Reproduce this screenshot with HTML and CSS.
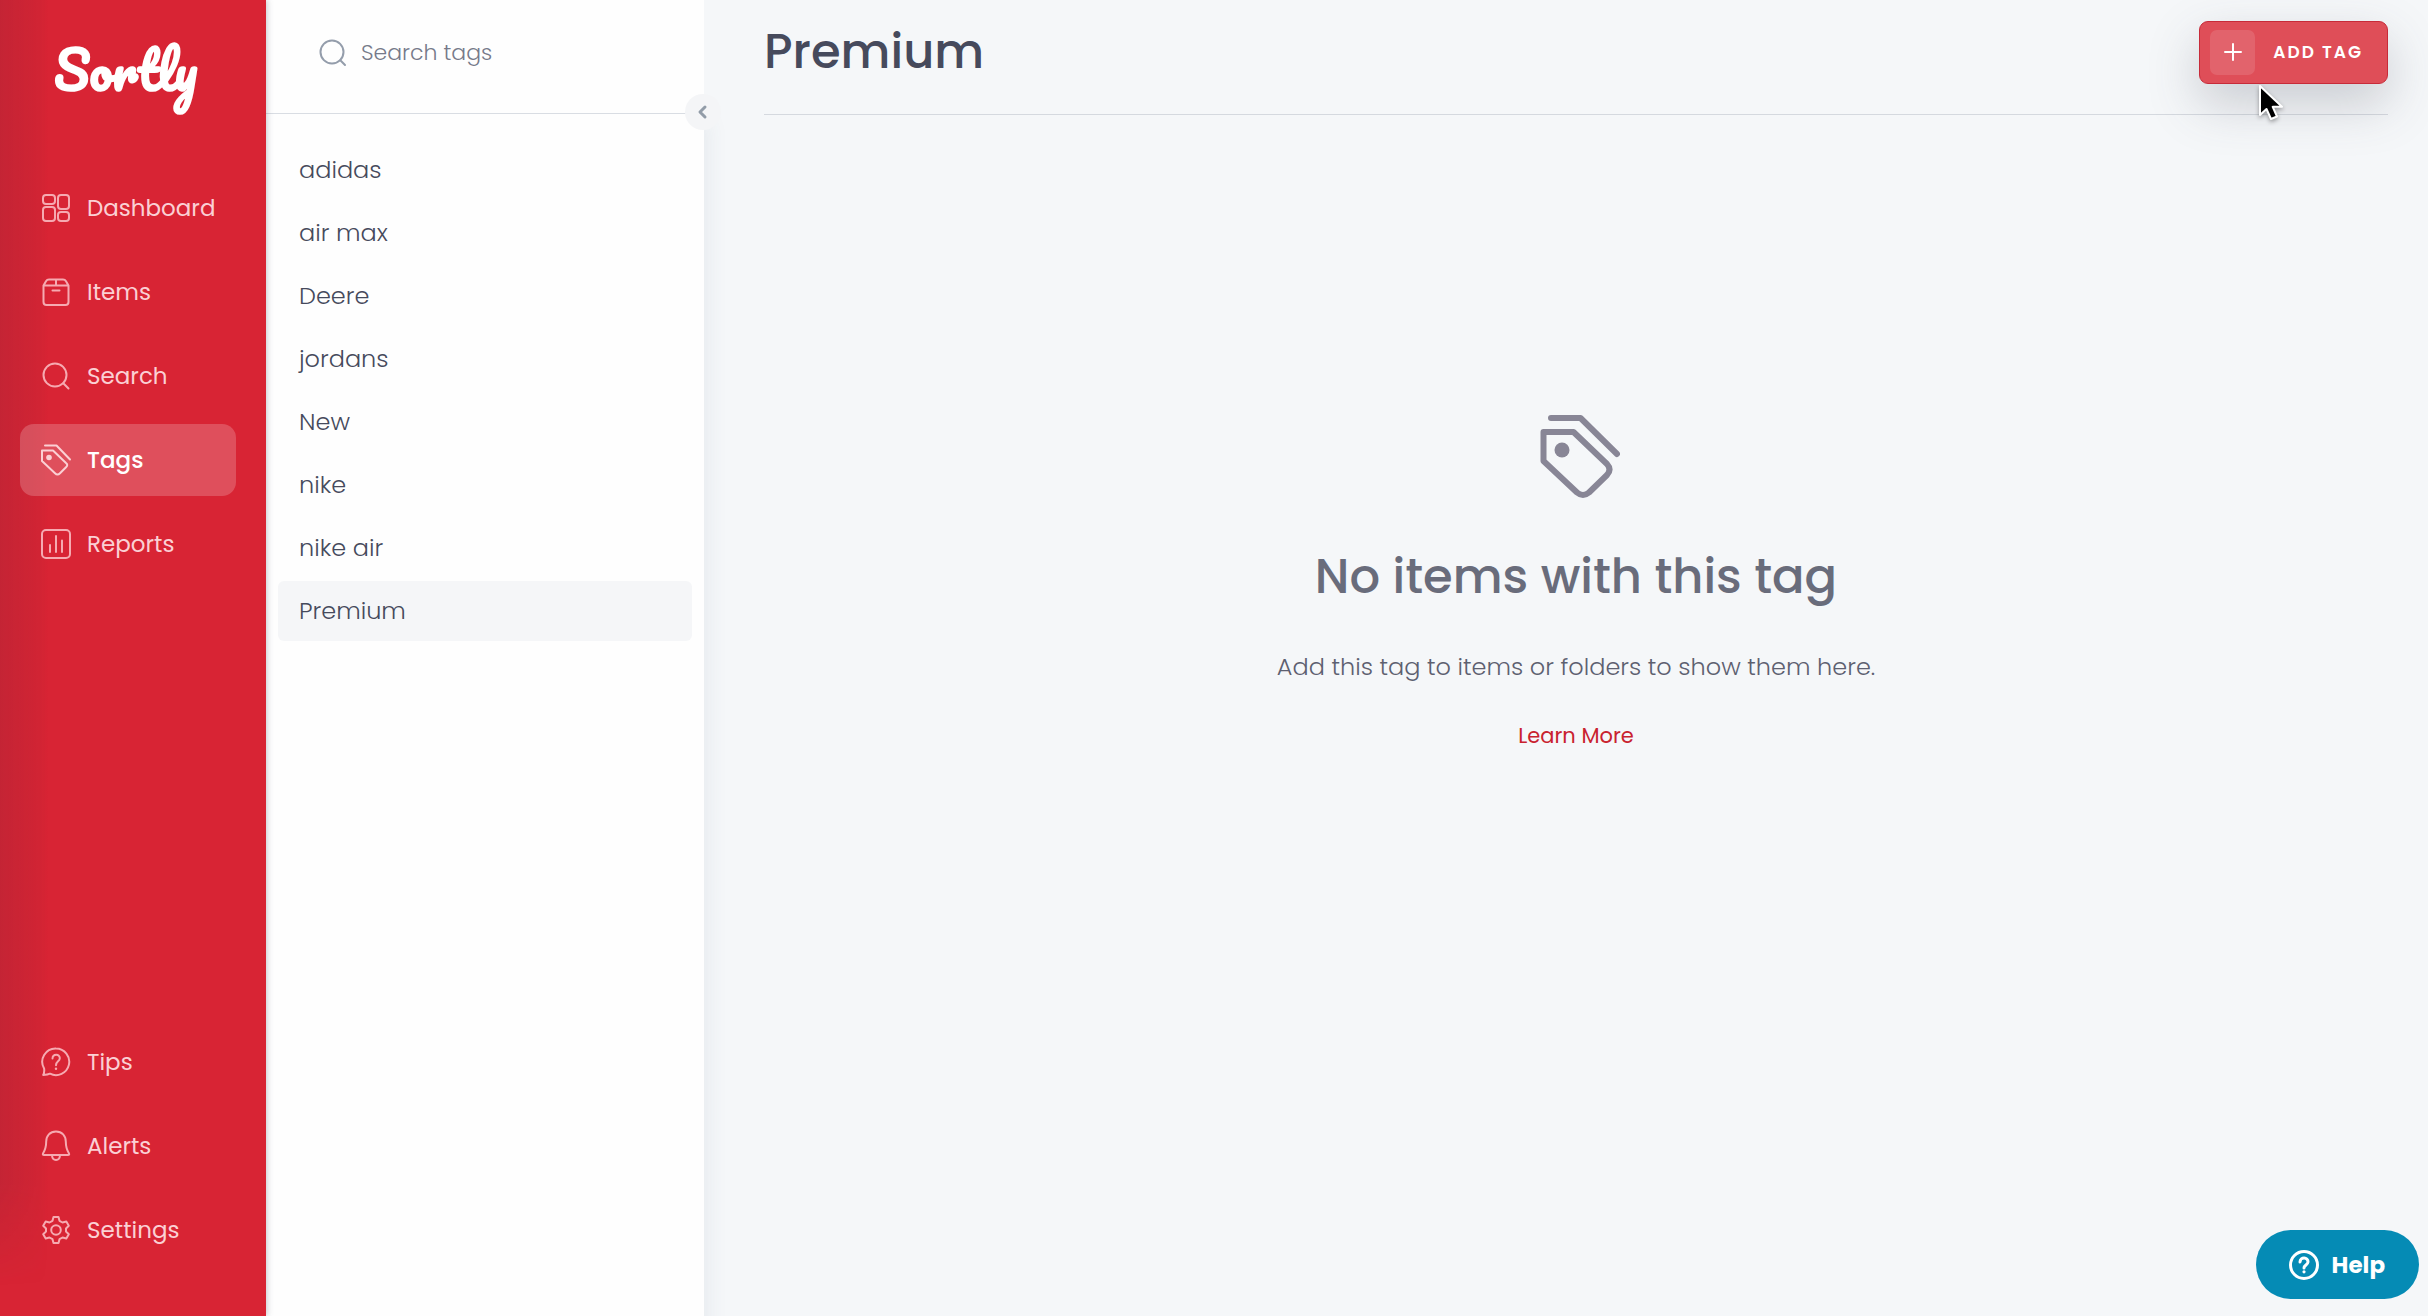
FILE: index.html
```html
<!DOCTYPE html>
<html lang="en">
	<head>
		<meta charset="utf-8" />
		<title>Sortly - Tags</title>
		<link rel="stylesheet" href="styles.css">
	</head>
	<body>
		<div class="wrap">
			<nav class="sidebar">
				<a class="logo" href="#">Sortly</a>

				<!-- main menu -->
				<ul class="menu">
					<li><a href="#">
						<svg class="icon" viewBox="0 0 32 32"><rect x="3" y="3" width="12" height="9" rx="3"/><rect x="18" y="3" width="11" height="14" rx="3"/><rect x="3" y="15" width="12" height="14" rx="3"/><rect x="18" y="20" width="11" height="9" rx="3"/></svg>
						Dashboard</a></li>
					<li><a href="#">
						<svg class="icon" viewBox="0 0 32 32"><path d="M3.500 9.500 6 5.200Q7 3.500 9 3.500h14q2 0 3 1.700l2.500 4.300V26q0 3-3 3h-19q-3 0-3-3zM3.500 9.500h25M16 3.500v6M12.500 14.500h7"/></svg>
						Items</a></li>
					<li><a href="#">
						<svg class="icon" viewBox="0 0 32 32"><circle cx="15" cy="15" r="11.500"/><path d="m23.300 23.300 5.200 5.200"/></svg>
						Search</a></li>
					<li><a class="active" href="#">
						<svg class="icon" viewBox="0 0 32 32"><path d="M2 6.500h11L26 19q2.500 2 0 4.300l-6 6q-2.500 2.500-5 0L2 17zM5 1.500h11.500L30 15.500"/><circle class="dot" cx="9" cy="13.500" r="2.800"/></svg>
						Tags</a></li>
					<li><a href="#">
						<svg class="icon" viewBox="0 0 32 32"><rect x="2" y="2" width="28" height="28" rx="4"/><path d="M10 17v7M16 8v16M22 12.500V24"/></svg>
						Reports</a></li>
				</ul>

				<!-- bottom menu -->
				<ul class="menu menu-bottom">
					<li><a href="#">
						<svg class="icon" viewBox="0 0 32 32"><path d="M16 2.500a13.300 13.300 0 1 1-6 25.200c-1.500.9-4 1.300-6.800 1.300 1-2 1.300-4 .9-6.500A13.300 13.300 0 0 1 16 2.500zM12.500 12.500c.3-5 7.500-4.700 7.300-.2-.1 3.200-3.800 3-3.800 7"/><circle class="dot" cx="16" cy="22.700" r="1.200"/></svg>
						Tips</a></li>
					<li><a href="#">
						<svg class="icon" viewBox="0 0 32 32"><path d="M16 1.500c-6 0-9.800 4.200-9.800 10 0 6-1 8.500-3.200 12-.5 1 0 1.500 1 1.500h24c1 0 1.500-.5 1-1.500-2.200-3.500-3.200-6-3.200-12 0-5.800-3.800-10-9.800-10zM12 25.500c.5 6 7.500 6 8 0"/></svg>
						Alerts</a></li>
					<li><a href="#">
						<svg class="icon" viewBox="0 0 32 32"><circle cx="16" cy="16" r="4.800"/><path d="M13.500 3h5l1 3.800 3 1.700 3.800-1 2.500 4.300-2.800 2.700v3l2.800 2.700-2.500 4.300-3.800-1-3 1.700-1 3.800h-5l-1-3.800-3-1.700-3.800 1-2.500-4.300L6 17.500v-3l-2.800-2.700 2.500-4.300 3.800 1 3-1.700z"/></svg>
						Settings</a></li>
				</ul>
			</nav>

			<aside class="tags">
				<div class="tags-search">
					<label for="search"><svg class="icon" viewBox="0 0 32 32"><circle cx="15" cy="15" r="11.500"/><path d="m23.300 23.300 4.700 4.700"/></svg></label>
					<input id="search" type="text" placeholder="Search tags" aria-label="Search tags" />
				</div>
				<button class="collapse" type="button" aria-label="Collapse">
					<svg viewBox="0 0 12 16"><path d="M9 3 4 8l5 5"/></svg>
				</button>
				<ul class="tag-list">
					<li><a href="#">adidas</a></li>
					<li><a href="#">air max</a></li>
					<li><a href="#">Deere</a></li>
					<li><a href="#">jordans</a></li>
					<li><a href="#">New</a></li>
					<li><a href="#">nike</a></li>
					<li><a href="#">nike air</a></li>
					<li><a class="active" href="#">Premium</a></li>
				</ul>
			</aside>

			<main class="content">
				<header class="content-head">
					<h1>Premium</h1>
					<button class="add" type="button">
						<span class="plus"><svg viewBox="0 0 18 18"><path d="M9 1v16M1 9h16"/></svg></span>
						ADD TAG
					</button>
				</header>

				<section class="empty">
					<svg class="empty-icon" viewBox="-8 0 88 84"><path d="M3.500 17h30L67 49q5 5.500 0 11L49 77.500q-6 5-12 0L3.500 46zM11 3h29.500L77 39"/><circle class="dot" cx="22" cy="35" r="7.500"/></svg>
					<h2>No items with this tag</h2>
					<p>Add this tag to items or folders to show them here.</p>
					<a href="#">Learn More</a>
				</section>
			</main>
		</div>

		<button class="help" type="button">
			<svg viewBox="0 0 32 32"><circle cx="16" cy="16" r="13.500"/><path d="M12 13c.2-5.500 8.300-5 8 0-.2 3-4 3-4 6"/><circle class="dot" cx="16" cy="22.800" r="1.600"/></svg>
			Help
		</button>

		<!-- mouse pointer -->
		<svg class="pointer" viewBox="0 0 26 38"><path d="M2 2v29l6.500-6 4.500 10 6-2.500-4.300-9.700H24z"/></svg>
	</body>
</html>
```

FILE: styles.css
```css
*{
	padding: 0;
	margin: 0;
	box-sizing: border-box;
}
body{
	font-family: "Poppins", "Inter", sans-serif;
	font-size: 24px;
	color: #464a5c;
	background-color: #f5f7f9;
}
ul{
	list-style: none;
}
a{
	text-decoration: none;
	color: inherit;
}
button{
	border: none;
	font-family: inherit;
	cursor: pointer;
}
svg{
	fill: none;
	stroke: currentColor;
	stroke-width: 2;
	stroke-linecap: round;
	stroke-linejoin: round;
}
.dot{
	fill: currentColor;
	stroke: none;
}
.icon{
	width: 32px;
	height: 32px;
	flex: none;
}
.wrap{
	display: flex;
	min-height: 100vh;
}

/* red sidebar */
.sidebar{
	position: relative;
	z-index: 2;
	width: 266px;
	flex: none;
	display: flex;
	flex-direction: column;
	padding: 0 30px 50px 20px;
	background-color: #d82434;
	color: #fbd0d4;
	box-shadow: 1px 0 6px rgba(70, 74, 92, .3);
}
.sidebar::before{
	content: "";
	position: absolute;
	left: 0;
	top: 0;
	bottom: 30px;
	width: 48px;
	background: linear-gradient(to right, rgba(80, 40, 60, .14), rgba(80, 40, 60, .05) 80%, transparent);
	-webkit-mask-image: linear-gradient(to bottom, #000 92%, transparent);
	mask-image: linear-gradient(to bottom, #000 92%, transparent);
}
.logo{
	height: 172px;
	padding: 34px 0 0 34px;
	font-family: "Pacifico", "Lobster", "Lato", sans-serif;
	font-size: 51px;
	font-weight: 700;
	line-height: 72px;
	color: #fff;
}
.menu{
	position: relative;
	display: flex;
	flex-direction: column;
	gap: 12px;
}
.menu-bottom{
	margin-top: auto;
}
.menu a{
	display: flex;
	align-items: center;
	gap: 15px;
	height: 72px;
	padding-left: 20px;
	border-radius: 14px;
	font-size: 23px;
}
.menu .icon{
	color: #f6aab1;
}
.menu .active{
	background-color: rgba(255, 255, 255, .2);
	color: #fff;
	font-weight: 500;
}
.menu .active .icon{
	color: #fbd0d4;
}

/* tag list */
.tags{
	position: relative;
	z-index: 1;
	width: 438px;
	flex: none;
	background-color: #fefefe;
	box-shadow: 4px 120px 20px rgba(70, 90, 110, .08);
}
.tags-search{
	display: flex;
	align-items: center;
	gap: 12px;
	height: 114px;
	padding: 0 40px 8px 51px;
	border-bottom: 1px solid #d9dde3;
	color: #949dab;
}
.tags-search label{
	display: flex;
}
.tags-search input{
	width: 100%;
	border: none;
	outline: none;
	background: none;
	font-family: inherit;
	font-size: 22px;
	font-weight: 300;
	color: #464a5c;
}
.tags-search input::placeholder{
	color: #767a8a;
}
.collapse{
	position: absolute;
	right: -17px;
	top: 94px;
	display: flex;
	align-items: center;
	justify-content: center;
	width: 36px;
	height: 36px;
	padding-right: 2px;
	border-radius: 50%;
	background-color: #f4f5f7;
	color: #929ca8;
}
.collapse svg{
	width: 12px;
	height: 16px;
	stroke-width: 3;
}
.tag-list{
	display: flex;
	flex-direction: column;
	gap: 3px;
	padding: 26px 12px;
}
.tag-list a{
	display: block;
	padding-left: 21px;
	border-radius: 6px;
	line-height: 60px;
	font-weight: 300;
}
.tag-list .active{
	background-color: #f5f6f8;
}

/* right side */
.content{
	flex: 1;
	padding: 0 40px 0 60px;
}
.content-head{
	display: flex;
	align-items: center;
	justify-content: space-between;
	height: 115px;
	padding-bottom: 10px;
	border-bottom: 1px solid #d5d9df;
}
h1, h2{
	font-size: 48px;
	font-weight: 500;
	line-height: 60px;
}
.add{
	display: flex;
	align-items: center;
	gap: 18px;
	height: 63px;
	padding: 0 24px 0 10px;
	border: 1px solid #c72b39;
	border-radius: 9px;
	background-color: #df4e58;
	color: #fff;
	font-size: 17px;
	font-weight: 600;
	letter-spacing: 2px;
	box-shadow: 0 20px 50px rgba(70, 74, 92, .25);
}
.plus{
	display: flex;
	align-items: center;
	justify-content: center;
	width: 45px;
	height: 45px;
	border-radius: 7px;
	background-color: rgba(255, 255, 255, .12);
}
.plus svg{
	width: 18px;
	height: 18px;
}
.empty{
	display: flex;
	flex-direction: column;
	align-items: center;
	padding-top: 300px;
	color: #696c7b;
}
.empty-icon{
	width: 88px;
	height: 84px;
	stroke-width: 6;
	color: #888696;
}
.empty h2{
	margin-top: 48px;
}
.empty p{
	margin-top: 44px;
	line-height: 32px;
	font-weight: 300;
	color: #5d6070;
}
.empty a{
	margin-top: 36px;
	font-size: 21px;
	line-height: 34px;
	color: #c9222f;
}

/* floating help button */
.help{
	position: fixed;
	right: 9px;
	bottom: 17px;
	z-index: 3;
	display: flex;
	align-items: center;
	gap: 12px;
	height: 69px;
	padding: 0 34px 0 32px;
	border-radius: 35px;
	background-color: #058bb5;
	color: #fff;
	font-size: 23px;
	font-weight: 700;
}
.help svg{
	width: 32px;
	height: 32px;
	stroke-width: 3;
}
.pointer{
	position: absolute;
	right: 144px;
	top: 84px;
	width: 26px;
	height: 38px;
	fill: #000;
	stroke: #fff;
	filter: drop-shadow(0 2px 2px rgba(0, 0, 0, .35));
}
```
